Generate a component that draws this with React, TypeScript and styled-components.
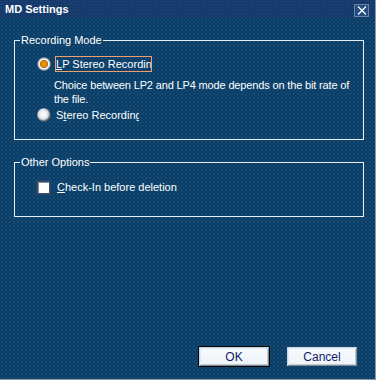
import styled, { createGlobalStyle } from "styled-components";

const GlobalStyle = createGlobalStyle`
  html, body {
    margin: 0;
    padding: 0;
    background: #0b3b6a;
  }
`;

const dots = `
  background-color: #0a3b6c;
  background-image:
    radial-gradient(circle, rgba(34, 104, 104, 0.6) 0.6px, transparent 1px),
    radial-gradient(circle, rgba(28, 92, 104, 0.45) 0.6px, transparent 1px);
  background-size: 4px 4px, 4px 4px;
  background-position: 0 0, 2px 2px;
`;

const App = () => {
  return (
    <>
      <GlobalStyle />
      <Window>
        <TitleBar>
          <Title>MD Settings</Title>
          <CloseButton>
            <svg width="10" height="9" viewBox="0 0 10 9">
              <path d="M1 0.5 L9 8.5 M9 0.5 L1 8.5" stroke="#ffffff" strokeWidth="1.3" />
            </svg>
          </CloseButton>
        </TitleBar>
        <Body>
          <Group>
            <Legend>Recording Mode</Legend>
            <OptionRow top={9}>
              <Radio checked />
              <OptionLabel focused width={97}>
                <u>L</u>P Stereo Recording
              </OptionLabel>
            </OptionRow>
            <Description>
              Choice between LP2 and LP4 mode depends on the bit rate of the file.
            </Description>
            <OptionRow top={1}>
              <Radio />
              <OptionLabel width={85}>
                S<u>t</u>ereo Recording
              </OptionLabel>
            </OptionRow>
            <GroupEnd height={16} />
          </Group>
          <Group>
            <Legend>Other Options</Legend>
            <OptionRow top={10}>
              <CheckBox />
              <OptionLabel>
                <u>C</u>heck-In before deletion
              </OptionLabel>
            </OptionRow>
            <GroupEnd height={21} />
          </Group>
        </Body>
        <Footer>
          <DefaultFrame>
            <Button>OK</Button>
          </DefaultFrame>
          <Button>Cancel</Button>
        </Footer>
      </Window>
    </>
  );
};

const Window = styled.div`
  ${dots}
  width: 376px;
  height: 380px;
  box-sizing: border-box;
  border-right: 1px solid #8a98a8;
  border-bottom: 1px solid #8a98a8;
  display: flex;
  flex-direction: column;
  font-family: "Liberation Sans", Arial, sans-serif;
  font-size: 11px;
  color: #ffffff;
`;

const TitleBar = styled.div`
  height: 18px;
  display: flex;
  align-items: center;
  justify-content: space-between;
  padding: 0 6px 0 5px;
  background-color: #163a6c;
  background-image: radial-gradient(circle, rgba(40, 80, 130, 0.6) 0.6px, transparent 1px);
  background-size: 3px 3px;
`;

const Title = styled.div`
  font-weight: bold;
  font-size: 11px;
  line-height: 13px;
  padding-top: 1px;
`;

const CloseButton = styled.div`
  width: 15px;
  height: 13px;
  margin-top: 3px;
  box-sizing: border-box;
  border: 1px solid #6a86ac;
  background: #244c7e;
  display: flex;
  align-items: center;
  justify-content: center;
`;

const Body = styled.div`
  padding: 16px 11px 0 14px;
  display: flex;
  flex-direction: column;
  gap: 16px;
`;

const Group = styled.fieldset`
  margin: 0;
  padding: 0;
  border: 1px solid #e8eef4;
  min-width: 0;
`;

const Legend = styled.legend`
  margin-left: 5px;
  padding: 0 1px;
  line-height: 13px;
`;

const OptionRow = styled.div<{ top: number }>`
  display: flex;
  align-items: center;
  height: 16px;
  margin-top: ${({ top }) => top}px;
  padding-left: 22px;
`;

const Radio = styled.span<{ checked?: boolean }>`
  width: 14px;
  height: 14px;
  border-radius: 50%;
  flex-shrink: 0;
  margin-right: 4px;
  background: ${({ checked }) =>
    checked
      ? "radial-gradient(circle at 50% 50%, #f09a10 0, #e08a08 3px, #b86a10 3.8px, #e6ecf2 4.3px, #ffffff 5px, #9aa6b4 6px, #56606e 7px)"
      : "radial-gradient(circle at 45% 45%, #ffffff 0, #f0f2f6 3px, #d6dce4 5px, #8e98a6 6px, #4c5664 7px)"};
`;

const CheckBox = styled.span`
  width: 13px;
  height: 13px;
  box-sizing: border-box;
  flex-shrink: 0;
  margin-right: 6px;
  background: #ffffff;
  border: 1px solid #3e4e62;
  box-shadow: inset 1px 1px 0 #8090a4, 0 0 0 1px #24486e;
`;

const OptionLabel = styled.span<{ focused?: boolean; width?: number }>`
  display: block;
  height: 16px;
  box-sizing: border-box;
  line-height: 14px;
  white-space: nowrap;
  overflow: hidden;
  width: ${({ width }) => (width ? `${width}px` : "auto")};
  border: 1px solid ${({ focused }) => (focused ? "#f0a070" : "transparent")};

  u {
    text-decoration: underline;
    text-underline-offset: 1px;
  }
`;

const Description = styled.div`
  margin: 6px 0 0 39px;
  width: 308px;
  line-height: 14px;
  letter-spacing: -0.15px;
`;

const GroupEnd = styled.div<{ height: number }>`
  height: ${({ height }) => height}px;
`;

const Footer = styled.div`
  margin-top: auto;
  display: flex;
  align-items: center;
  justify-content: flex-end;
  gap: 17px;
  padding: 0 18px 12px 0;
`;

const DefaultFrame = styled.div`
  border: 1px solid #000000;
  display: flex;
`;

const Button = styled.div`
  width: 70px;
  height: 19px;
  box-sizing: border-box;
  display: flex;
  align-items: center;
  justify-content: center;
  color: #0c1a6a;
  font-size: 12px;
  background: linear-gradient(#f8fbfe, #eef3f8);
  box-shadow: inset 1px 1px 0 #c8d8e6, inset -1px -1px 0 #7e8a96,
    inset 2px 2px 0 #e2ecf4, inset -2px -2px 0 #c0cad4;
`;

export default App;
